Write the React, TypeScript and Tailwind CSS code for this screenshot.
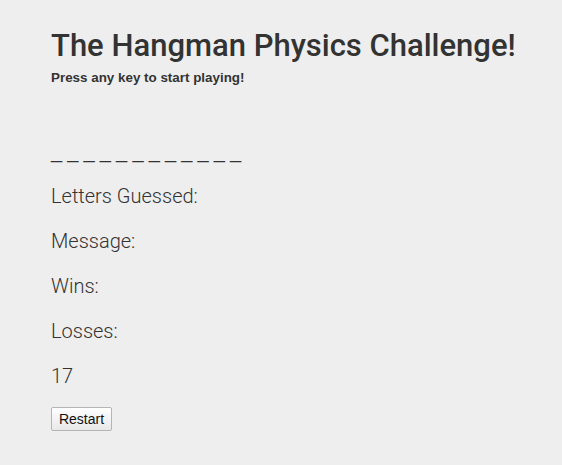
import React from 'react';

const rows = ['Letters Guessed:', 'Message:', 'Wins:', 'Losses:', '17'];

const App: React.FC = () => {
  return (
    <div className="min-h-[465px] w-full bg-[#eeeeee] pl-[51px] pt-[28px] text-[#333333] font-['Liberation_Sans',Arial,sans-serif]">
      {/* Header */}
      <h1 className="whitespace-nowrap font-['Roboto',sans-serif] text-[31px] font-medium leading-[36px]">
        The Hangman Physics Challenge!
      </h1>
      <p className="mt-[4px] text-[13.4px] font-bold leading-[20px]">Press any key to start playing!</p>

      {/* Game state */}
      <div className="mt-[41px] font-['Roboto',sans-serif]">
        <div className="font-['Liberation_Sans',Arial,sans-serif] text-[20px] leading-[45px] tracking-[-0.2px]">
          _ _ _ _ _ _ _ _ _ _ _ _
        </div>
        {rows.map((row) => (
          <div key={row} className="text-[20px] font-light leading-[45px]">
            {row}
          </div>
        ))}
      </div>

      <button className="mt-[8px] h-[24px] w-[61px] rounded-[2px] border border-[#b5b5b5] bg-gradient-to-b from-white to-[#e8e8e8] text-[14px] leading-none text-[#111111]">
        Restart
      </button>
    </div>
  );
};

export default App;
